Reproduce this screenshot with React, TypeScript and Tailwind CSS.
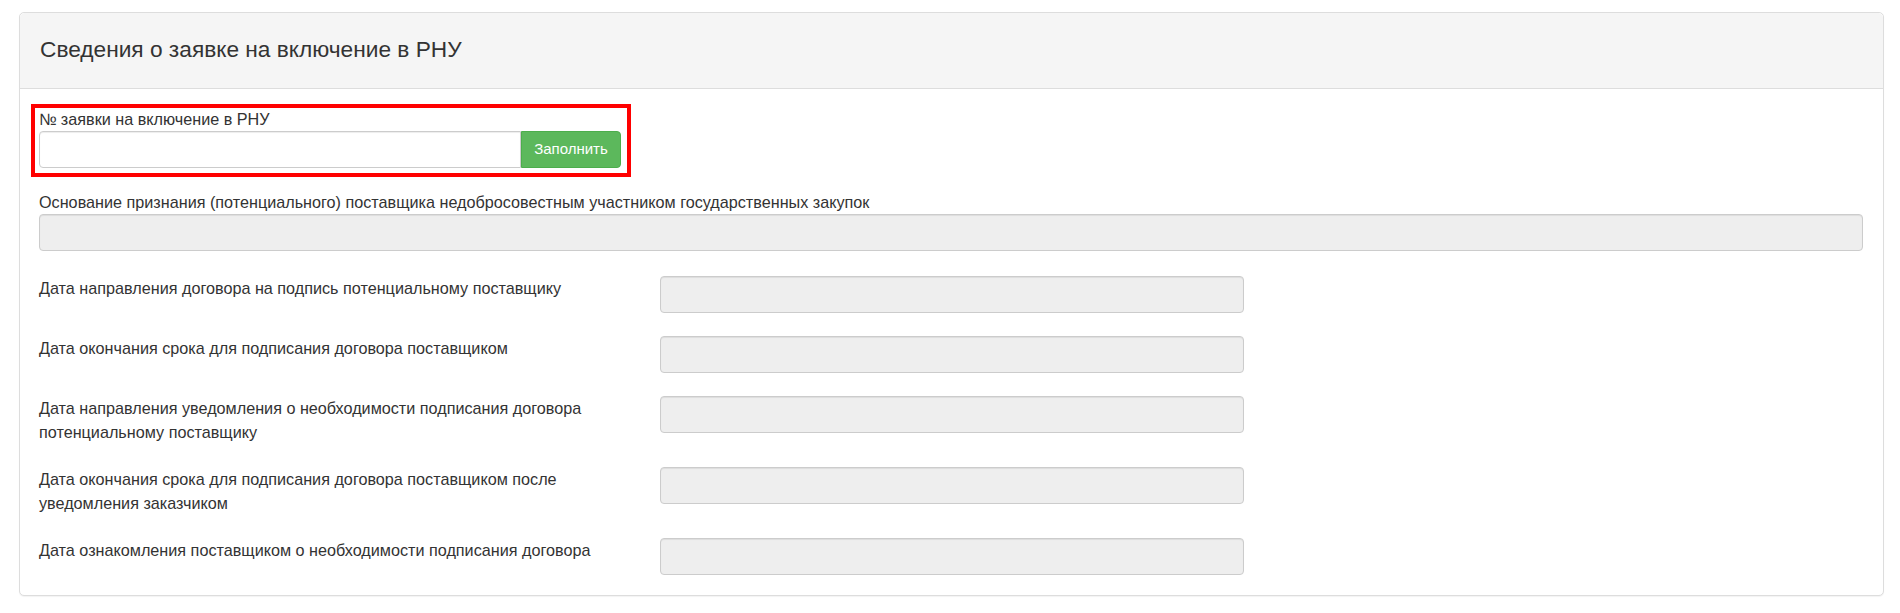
import React from 'react';

const rows: string[] = [
  'Дата направления договора на подпись потенциальному поставщику',
  'Дата окончания срока для подписания договора поставщиком',
  'Дата направления уведомления о необходимости подписания договора потенциальному поставщику',
  'Дата окончания срока для подписания договора поставщиком после уведомления заказчиком',
  'Дата ознакомления поставщиком о необходимости подписания договора',
];

const inputBase =
  'h-[37px] rounded-[4px] border border-[#ccc] shadow-[inset_0_1px_1px_rgba(0,0,0,0.075)]';

const App: React.FC = () => {
  return (
    <div className="min-h-screen bg-white pt-[12px] pl-[19px] font-['Liberation_Sans',Arial,sans-serif] text-[#333]">
      <div className="w-[1865px] rounded-[5px] border border-[#ddd] bg-white shadow-[0_1px_1px_rgba(0,0,0,0.05)]">
        <div className="flex h-[76px] items-center rounded-t-[5px] border-b border-[#ddd] bg-[#f5f5f5] px-[20px] pb-[3px]">
          <h3 className="text-[22.7px] leading-[26px] text-[#333]">Сведения о заявке на включение в РНУ</h3>
        </div>

        <div className="px-[19px] pt-[15px] pb-[20px]">
          <div className="-ml-[8px] w-[600px] border-4 border-[#ff0000] pt-0 pr-[6px] pb-[5px] pl-[4px]">
            <label className="block text-[16.2px] leading-[23px]">№ заявки на включение в РНУ</label>
            <div className="flex">
              <input type="text" className={`${inputBase} w-[482px] rounded-r-none bg-white`} />
              <button className="h-[37px] w-[100px] rounded-r-[4px] border border-[#4cae4c] bg-[#5cb85c] text-[15px] text-white">
                Заполнить
              </button>
            </div>
          </div>

          <label className="mt-[14px] block text-[16.2px] leading-[23px]">
            Основание признания (потенциального) поставщика недобросовестным участником государственных закупок
          </label>
          <input type="text" disabled className={`${inputBase} block w-[1824px] bg-[#eee]`} />

          <div className="mt-[25px] flex flex-col gap-[23px]">
            {rows.map((text) => (
              <div key={text} className="flex items-start">
                <div className="w-[584px] shrink-0 pt-px text-[16.2px] leading-[23.5px]">{text}</div>
                <div className="w-[37px] shrink-0" />
                <input type="text" disabled className={`${inputBase} w-[584px] bg-[#eee]`} />
              </div>
            ))}
          </div>
        </div>
      </div>
    </div>
  );
};

export default App;
